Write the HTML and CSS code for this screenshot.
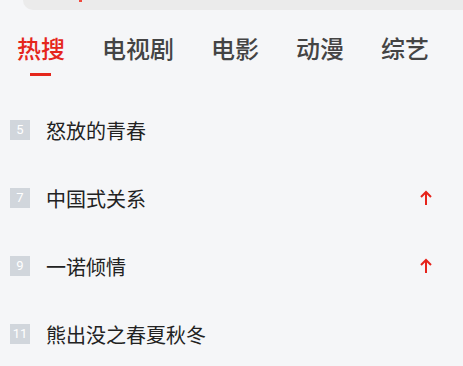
FILE: index.html
```html
<!DOCTYPE html>
<html lang="zh">
<head>
<meta charset="utf-8">
<link rel="stylesheet" href="styles.css">
</head>
<body>
<div class="search"><span class="search-mark"></span></div>
<nav class="tabs">
  <div class="tab active">热搜<span class="underline"></span></div>
  <div class="tab">电视剧</div>
  <div class="tab">电影</div>
  <div class="tab">动漫</div>
  <div class="tab">综艺</div>
</nav>
<ul class="list">
  <li class="row"><span class="rank">5</span><span class="title">怒放的青春</span></li>
  <li class="row"><span class="rank">7</span><span class="title">中国式关系</span><svg class="up" width="12" height="16" viewBox="0 0 12 16"><path d="M6 15V2M1 7l5-5 5 5" fill="none" stroke="#e6231b" stroke-width="2"/></svg></li>
  <li class="row"><span class="rank">9</span><span class="title">一诺倾情</span><svg class="up" width="12" height="16" viewBox="0 0 12 16"><path d="M6 15V2M1 7l5-5 5 5" fill="none" stroke="#e6231b" stroke-width="2"/></svg></li>
  <li class="row"><span class="rank">11</span><span class="title">熊出没之春夏秋冬</span></li>
</ul>
</body>
</html>
```
FILE: styles.css
```css
html, body {
  margin: 0;
  padding: 0;
  background: #f5f6f8;
  font-family: "Noto Sans CJK SC", "Noto Sans", sans-serif;
}
.search {
  margin-left: 23px;
  height: 10px;
  background: #ebebeb;
  border-bottom-left-radius: 12px;
  display: flex;
}
.search-mark {
  width: 3px;
  height: 2px;
  background: #f04a3e;
  margin-left: 56px;
}
.tabs {
  display: flex;
  gap: 37px;
  padding-left: 17px;
  margin-top: 25px;
  height: 61px;
}
.tab {
  position: relative;
  font-size: 24px;
  line-height: 26px;
  font-weight: 500;
  color: #444;
}
.tab.active {
  color: #e5261c;
}
.underline {
  position: absolute;
  left: 13px;
  top: 38px;
  width: 21px;
  height: 3px;
  background: #e5261c;
}
.list {
  list-style: none;
  margin: 0;
  padding: 0 31px 0 10px;
}
.row {
  display: flex;
  align-items: center;
  height: 68px;
}
.rank {
  width: 20px;
  height: 20px;
  background: #d1d6dc;
  color: #fff;
  font-family: "Roboto", sans-serif;
  font-size: 13px;
  line-height: 20px;
  text-align: center;
}
.title {
  margin-left: 16px;
  font-size: 20px;
  color: #222;
  flex: 1;
}
.up {
  display: block;
}
```
